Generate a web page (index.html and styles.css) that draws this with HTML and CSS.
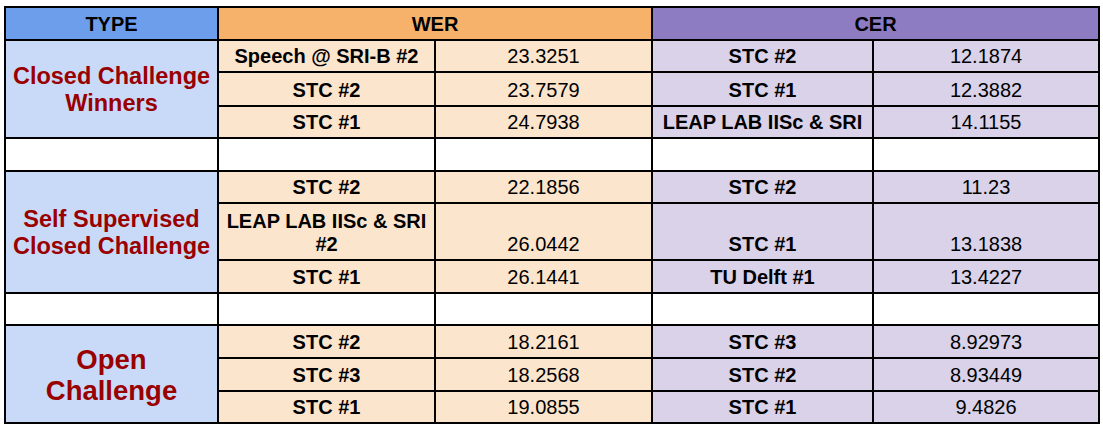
FILE: index.html
```html
<!DOCTYPE html>
<html>
<head>
<meta charset="utf-8">
<link rel="stylesheet" href="styles.css">
</head>
<body>
<table class="results">
  <colgroup>
    <col class="c-type">
    <col class="c-wname">
    <col class="c-wval">
    <col class="c-cname">
    <col class="c-cval">
  </colgroup>
  <tr class="r-head">
    <th class="h-type">TYPE</th>
    <th class="h-wer" colspan="2">WER</th>
    <th class="h-cer" colspan="2">CER</th>
  </tr>
  <tr class="r32">
    <td class="type" rowspan="3">Closed Challenge<br>Winners</td>
    <td class="wer name">Speech @ SRI-B #2</td>
    <td class="wer val">23.3251</td>
    <td class="cer name">STC #2</td>
    <td class="cer val">12.1874</td>
  </tr>
  <tr class="r34">
    <td class="wer name">STC #2</td>
    <td class="wer val">23.7579</td>
    <td class="cer name">STC #1</td>
    <td class="cer val">12.3882</td>
  </tr>
  <tr class="r32">
    <td class="wer name">STC #1</td>
    <td class="wer val">24.7938</td>
    <td class="cer name">LEAP LAB IISc &amp; SRI</td>
    <td class="cer val">14.1155</td>
  </tr>
  <tr class="r33 blank">
    <td></td><td></td><td></td><td></td><td></td>
  </tr>
  <tr class="r32">
    <td class="type" rowspan="3">Self Supervised<br>Closed Challenge</td>
    <td class="wer name">STC #2</td>
    <td class="wer val">22.1856</td>
    <td class="cer name">STC #2</td>
    <td class="cer val">11.23</td>
  </tr>
  <tr class="r57">
    <td class="wer name">LEAP LAB IISc &amp; SRI #2</td>
    <td class="wer val">26.0442</td>
    <td class="cer name">STC #1</td>
    <td class="cer val">13.1838</td>
  </tr>
  <tr class="r33">
    <td class="wer name">STC #1</td>
    <td class="wer val">26.1441</td>
    <td class="cer name">TU Delft #1</td>
    <td class="cer val">13.4227</td>
  </tr>
  <tr class="r32 blank">
    <td></td><td></td><td></td><td></td><td></td>
  </tr>
  <tr class="r33">
    <td class="type type-big" rowspan="3">Open<br>Challenge</td>
    <td class="wer name">STC #2</td>
    <td class="wer val">18.2161</td>
    <td class="cer name">STC #3</td>
    <td class="cer val">8.92973</td>
  </tr>
  <tr class="r33">
    <td class="wer name">STC #3</td>
    <td class="wer val">18.2568</td>
    <td class="cer name">STC #2</td>
    <td class="cer val">8.93449</td>
  </tr>
  <tr class="r32">
    <td class="wer name">STC #1</td>
    <td class="wer val">19.0855</td>
    <td class="cer name">STC #1</td>
    <td class="cer val">9.4826</td>
  </tr>
</table>
</body>
</html>
```

FILE: styles.css
```css
html, body {
  margin: 0;
  padding: 0;
  background: #ffffff;
}

body {
  padding: 6px 0 0 4px;
  font-family: "Liberation Sans", Arial, sans-serif;
  color: #000000;
}

.results {
  table-layout: fixed;
  width: 1096px;
  border-collapse: separate;
  border-spacing: 0;
  border-left: 2px solid #000;
  border-top: 2px solid #000;
}

.c-type { width: 213px; }
.c-wname { width: 217px; }
.c-wval { width: 217px; }
.c-cname { width: 221px; }
.c-cval { width: 226px; }

.results th,
.results td {
  box-sizing: border-box;
  border-right: 2px solid #000;
  border-bottom: 2px solid #000;
  padding: 0 4px 3px 4px;
  text-align: center;
  vertical-align: bottom;
  font-size: 20px;
  line-height: 23px;
  overflow: hidden;
}

.results th {
  font-weight: bold;
}

.r-head { height: 33px; }
.r32 { height: 32px; }
.r33 { height: 33px; }
.r34 { height: 34px; }
.r57 { height: 57px; }

.h-type { background: #6d9eeb; }
.h-wer { background: #f6b26b; }
.h-cer { background: #8e7cc3; }

.type {
  background: #c9daf8;
  color: #990000;
  font-weight: bold;
  vertical-align: middle !important;
  font-size: 23.5px !important;
  line-height: 27px !important;
  padding: 2px 2px 0 2px !important;
}

.type-big {
  font-size: 27.5px !important;
  line-height: 31px !important;
}

.wer { background: #fce5cd; }
.cer { background: #d9d2e9; }

.name { font-weight: bold; }
.val { font-weight: normal; }

.blank td { background: #ffffff; }
```
